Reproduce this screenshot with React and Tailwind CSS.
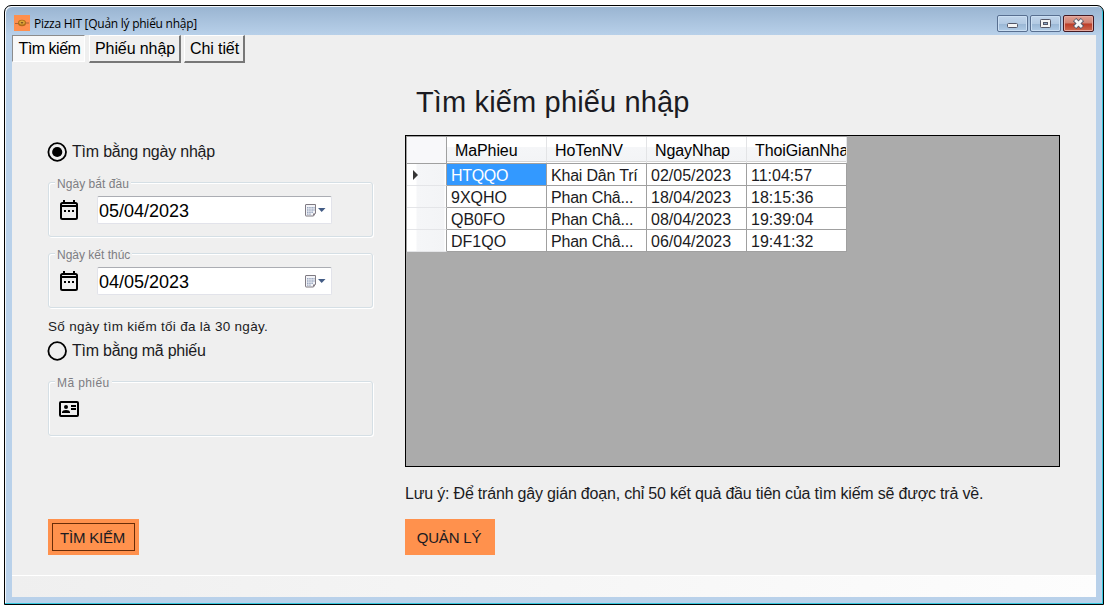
const rows = [
  ["HTQQO", "Khai Dân Trí", "02/05/2023", "11:04:57"],
  ["9XQHO", "Phan Châ...", "18/04/2023", "18:15:36"],
  ["QB0FO", "Phan Châ...", "08/04/2023", "19:39:04"],
  ["DF1QO", "Phan Châ...", "06/04/2023", "19:41:32"],
];
const headers = ["MaPhieu", "HoTenNV", "NgayNhap", "ThoiGianNhap"];

function AppIcon() {
  return (
    <svg width="16" height="16" viewBox="0 0 16 16" className="shrink-0">
      <rect width="16" height="16" fill="#ff8f4e" />
      <path d="M1 8.5h4M11 8h4" stroke="#a8653a" strokeWidth="1.2" />
      <ellipse cx="8" cy="8" rx="4" ry="3.2" fill="#b06a18" />
      <ellipse cx="8" cy="7.4" rx="2.8" ry="2" fill="#dda638" />
      <ellipse cx="8" cy="7.8" rx="1.3" ry=".8" fill="#784b20" />
    </svg>
  );
}

function CaptionButton({ kind }) {
  const close = kind === "close";
  return (
    <button
      aria-label={kind}
      className={
        close
          ? "flex h-[17px] w-[31px] items-center justify-center rounded-[2px] border border-[#431922] bg-[linear-gradient(#dfa094_0%,#d08070_49%,#bb3a26_51%,#cf6a50_100%)] shadow-[inset_0_0_0_1px_#e6aaa0]"
          : "flex h-[17px] w-[31px] items-center justify-center rounded-[2px] border border-[#586f90] bg-[linear-gradient(#c1d5eb_0%,#b3cae3_50%,#98b5d3_51%,#b0cbe6_100%)] shadow-[inset_0_0_0_1px_#cbdff3]"
      }
    >
      {kind === "minimize" && (
        <svg width="13" height="11" viewBox="0 0 13 11"><rect x="1.5" y="5.5" width="10" height="4" rx="1" fill="#f4f4f4" stroke="#535666" /></svg>
      )}
      {kind === "maximize" && (
        <svg width="11" height="11" viewBox="0 0 11 11">
          <rect x=".5" y="1.5" width="10" height="8" rx=".8" fill="#f4f4f4" stroke="#535666" />
          <rect x="3.5" y="4.5" width="4" height="2" fill="#8da8c8" stroke="#535666" />
        </svg>
      )}
      {close && (
        <svg width="13" height="11" viewBox="0 0 13 11">
          <path d="M2.600 1.600l7.800 7.800M10.400 1.600L2.600 9.400" stroke="#535666" strokeWidth="4.600" />
          <path d="M3.100 2.100l6.800 6.800M9.900 2.100L3.100 8.900" stroke="#f6f6f6" strokeWidth="2.800" />
        </svg>
      )}
    </button>
  );
}

function CalendarIcon() {
  return (
    <svg width="18" height="20" viewBox="0 0 18 20">
      <path d="M2.5 3H15.5Q17 3 17 4.5V17.5Q17 19 15.5 19H2.5Q1 19 1 17.5V4.5Q1 3 2.5 3Z" fill="none" stroke="#000" strokeWidth="2" />
      <path d="M1 6H17" stroke="#000" strokeWidth="2" />
      <path d="M4 0V4M14 0V4" stroke="#000" strokeWidth="2" />
      <path d="M4 11H6M8 11H10M12 11H14" stroke="#000" strokeWidth="2" />
    </svg>
  );
}

function DateDropIcon() {
  return (
    <svg width="21" height="13" viewBox="0 0 21 13" className="mt-px">
      <path d="M1 .5H10.5V9L8.5 12H1Q.5 12 .5 11.500V1Q.5 .5 1 .5Z" fill="#f3f4f8" stroke="#7f7a82" />
      <path d="M2 3h1.500v1.500H2zM4.200 3h1.500v1.500H4.200zM6.400 3h1.500v1.500H6.400zM8.400 3h1.200v1.500H8.400zM2 5.200h1.500v1.500H2zM4.200 5.200h1.500v1.500H4.200zM6.400 5.200h1.500v1.500H6.400zM8.400 5.200h1.200v1.500H8.400zM2 7.400h1.500v1.500H2zM4.200 7.400h1.500v1.500H4.200zM6.400 7.400h1.500v1.500H6.400zM2 9.600h1.500v1.200H2zM4.200 9.600h1.500v1.200H4.200z" fill="#9aa7c0" />
      <path d="M8 12V9.500H10.500Z" fill="#857f86" />
      <path d="M13 4H20.500L16.700 8Z" fill="#435c85" />
    </svg>
  );
}

function CardIcon() {
  return (
    <svg width="20" height="16" viewBox="0 0 20 16">
      <rect x="1" y="1" width="18" height="14" rx="1" fill="none" stroke="#000" strokeWidth="2" />
      <circle cx="7" cy="6" r="2" />
      <path d="M3 12V11Q3.500 9 7 9T11 11V12Z" />
      <path d="M12 5H17M12 8H17" stroke="#000" strokeWidth="2" />
    </svg>
  );
}

function Radio({ checked, children, className }) {
  return (
    <label className={className}>
      <svg width="20" height="20" viewBox="0 0 20 20" className="-ml-px shrink-0">
        <circle cx="10.200" cy="10" r="8.800" fill="none" stroke="#000" strokeWidth="1.8" />
        {checked && <circle cx="10.200" cy="10" r="5.100" />}
      </svg>
      {children}
    </label>
  );
}

function Group({ title, className, legendClass, children }) {
  return (
    <div className={className}>
      <span className={legendClass}>{title}</span>
      {children}
    </div>
  );
}

function DateBox({ value }) {
  return (
    <div className="ml-[19px] flex h-7 w-[235px] items-center justify-between rounded-[2px] border border-[#e2e3ea] border-t-[#abadb3] bg-white pr-[5px] pl-[1px] text-[18px] leading-none text-black">
      <span className="pt-[2px]">{value}</span>
      <DateDropIcon />
    </div>
  );
}

export default function App() {
  return (
    <div className="h-[608px] w-[1109px] overflow-hidden bg-white pt-[5px] pl-1 font-['Liberation_Sans',sans-serif] text-[#1b1b22]">
      <div className="flex h-[600px] w-[1100px] flex-col rounded-t-[7px] border border-black bg-[linear-gradient(#99b4d1_0px,#b9d1ea_30px,#b9d1ea_100%)] px-[7px] pb-[7px] shadow-[inset_-1px_-1px_#35c8de,inset_1px_1px_#f4f8fc]">
        <header className="flex h-[29px] shrink-0 items-start justify-between pt-[9px] pr-[2px] pl-[2px]">
          <div className="flex h-4 items-center gap-1">
            <AppIcon />
            <h1 className="pt-[2px] font-['Open_Sans',sans-serif] text-[12px] leading-4 tracking-[-0.26px] whitespace-nowrap text-black">Pizza HIT [Quản lý phiếu nhập]</h1>
          </div>
          <div className="flex gap-[2px]">
            <CaptionButton kind="minimize" />
            <CaptionButton kind="maximize" />
            <CaptionButton kind="close" />
          </div>
        </header>

        <div className="flex min-h-0 flex-1 flex-col bg-[#efefef]">
          <nav className="flex h-7 shrink-0 text-[16px] whitespace-nowrap text-black">
            <button className="h-[27px] w-[73px] border border-t-[#8c8c8c] border-r-white border-b-white border-l-[#8c8c8c] bg-[#f8f8f8] pl-[2px] leading-[26px] tracking-[-0.5px]">Tìm kiếm</button>
            <button className="ml-[4px] h-7 w-[92px] border-t border-r-2 border-b-2 border-l border-t-white border-r-[#777] border-b-[#777] border-l-white pl-[1px] leading-[26px] tracking-[-0.1px]">Phiếu nhập</button>
            <button className="ml-[3px] h-7 w-[61px] border-t border-r-2 border-b-2 border-l border-t-white border-r-[#777] border-b-[#777] border-l-white pl-[1px] leading-[26px] tracking-[-0.1px]">Chi tiết</button>
          </nav>

          <main className="flex min-h-0 flex-1 items-start gap-8 pl-9">
            <section className="flex w-[325px] flex-col items-start whitespace-nowrap">
              <Radio checked className="mt-[78px] flex h-[22px] items-center gap-[5px] text-[16px] tracking-[-0.21px]">Tìm bằng ngày nhập</Radio>
              <Group title="Ngày bắt đầu" className="relative mt-[19px] flex h-[55px] w-[325px] items-center rounded-[3px] border border-[#d5dfe5] pl-[11px] shadow-[inset_1px_1px_white,1px_1px_white]" legendClass="absolute top-[-7px] left-[6px] bg-[#efefef] px-[2px] text-[12px] leading-4 tracking-[0.05px] text-[#7d7d82]">
                <CalendarIcon />
                <DateBox value="05/04/2023" />
              </Group>
              <Group title="Ngày kết thúc" className="relative mt-4 flex h-[55px] w-[325px] items-center rounded-[3px] border border-[#d5dfe5] pl-[11px] shadow-[inset_1px_1px_white,1px_1px_white]" legendClass="absolute top-[-7px] left-[6px] bg-[#efefef] px-[2px] text-[12px] leading-4 text-[#7d7d82]">
                <CalendarIcon />
                <DateBox value="04/05/2023" />
              </Group>
              <p className="mt-[8px] mb-px h-5 text-[13.5px] leading-[21px] tracking-[0.29px]">Số ngày tìm kiếm tối đa là 30 ngày.</p>
              <Radio className="mt-[3px] flex h-[22px] items-center gap-[5px] text-[16px] tracking-[-0.25px]">Tìm bằng mã phiếu</Radio>
              <Group title="Mã phiếu" className="relative mt-[19px] flex h-[55px] w-[325px] items-center rounded-[3px] border border-[#d5dfe5] pl-[10px] shadow-[inset_1px_1px_white,1px_1px_white]" legendClass="absolute top-[-7px] left-[6px] bg-[#efefef] px-[2px] text-[12px] leading-4 tracking-[0.4px] text-[#7d7d82]">
                <CardIcon />
              </Group>
              <button className="mt-[83px] h-9 w-[91px] bg-[#ff914d] p-1 text-[15px] tracking-[-0.2px]">
                <span className="flex h-7 items-center justify-center border border-[#692c08] pt-[2px] pr-[2px]">TÌM KIẾM</span>
              </button>
            </section>

            <section className="flex w-[655px] flex-col items-start whitespace-nowrap">
              <h2 className="mt-[19px] ml-[11px] h-[42px] text-[29px] leading-[40px] tracking-[0.15px]">Tìm kiếm phiếu nhập</h2>
              <div className="mt-[11px] h-[332px] w-[655px] border border-black bg-[#ababab] text-[16px]">
                <div className="w-[441px] border-t border-l border-[#a0a0a0] bg-white">
                  <div className="flex h-[27px] border-b border-[#a0a0a0] bg-[linear-gradient(#fff_0%,#fff_38%,#f5f6f8_40%,#f3f4f6_92%,#d5d5d5_93%,#d5d5d5_95%,#fff_96%)] text-black">
                    <div className="w-10 border-r border-[#a0a0a0] bg-[#f8f8fa]" />
                    {headers.map((name) => (
                      <div key={name} className="w-[100px] overflow-hidden border-r border-[#e3e4e6] pl-2 leading-[27px] tracking-[-0.1px]">{name}</div>
                    ))}
                  </div>
                  {rows.map((row, r) => (
                    <div key={row[0]} className="flex h-[22px]">
                      <div className="flex w-10 items-center border-r border-b border-r-[#a0a0a0] border-b-[#e4e5e8] bg-[linear-gradient(90deg,#fff_0px,#fff_9px,#f5f6f8_10px,#f3f4f6_37px,#fff_38px)] pl-[6px]">
                        {r === 0 && <svg width="5" height="10" viewBox="0 0 5 10"><path d="M0 0L5 5L0 10Z" fill="#353535" /></svg>}
                      </div>
                      {row.map((cell, c) => (
                        <div key={c} className={r === 0 && c === 0 ? "w-[100px] border-r border-b border-[#a0a0a0] bg-[#3399ff] pl-1 leading-[23px] tracking-[-0.3px] text-white" : c === 1 ? "w-[100px] overflow-hidden border-r border-b border-[#a0a0a0] pl-1 leading-[23px] tracking-[-0.2px]" : "w-[100px] overflow-hidden border-r border-b border-[#a0a0a0] pl-1 leading-[23px] tracking-[0px]"}>{cell}</div>
                      ))}
                    </div>
                  ))}
                </div>
              </div>
              <p className="mt-[17px] h-5 text-[16px] leading-5 tracking-[-0.19px]">Lưu ý: Để tránh gây gián đoạn, chỉ 50 kết quả đầu tiên của tìm kiếm sẽ được trả về.</p>
              <button className="mt-[15px] h-9 w-[90px] bg-[#ff914d] pt-[2px] pr-[2px] text-[15px] tracking-[-0.2px]">QUẢN LÝ</button>
            </section>
          </main>
          <footer className="h-[22px] shrink-0 border-t border-white bg-linear-to-r from-[#efefef] to-[#fdfdfd]" />
        </div>
      </div>
    </div>
  );
}
